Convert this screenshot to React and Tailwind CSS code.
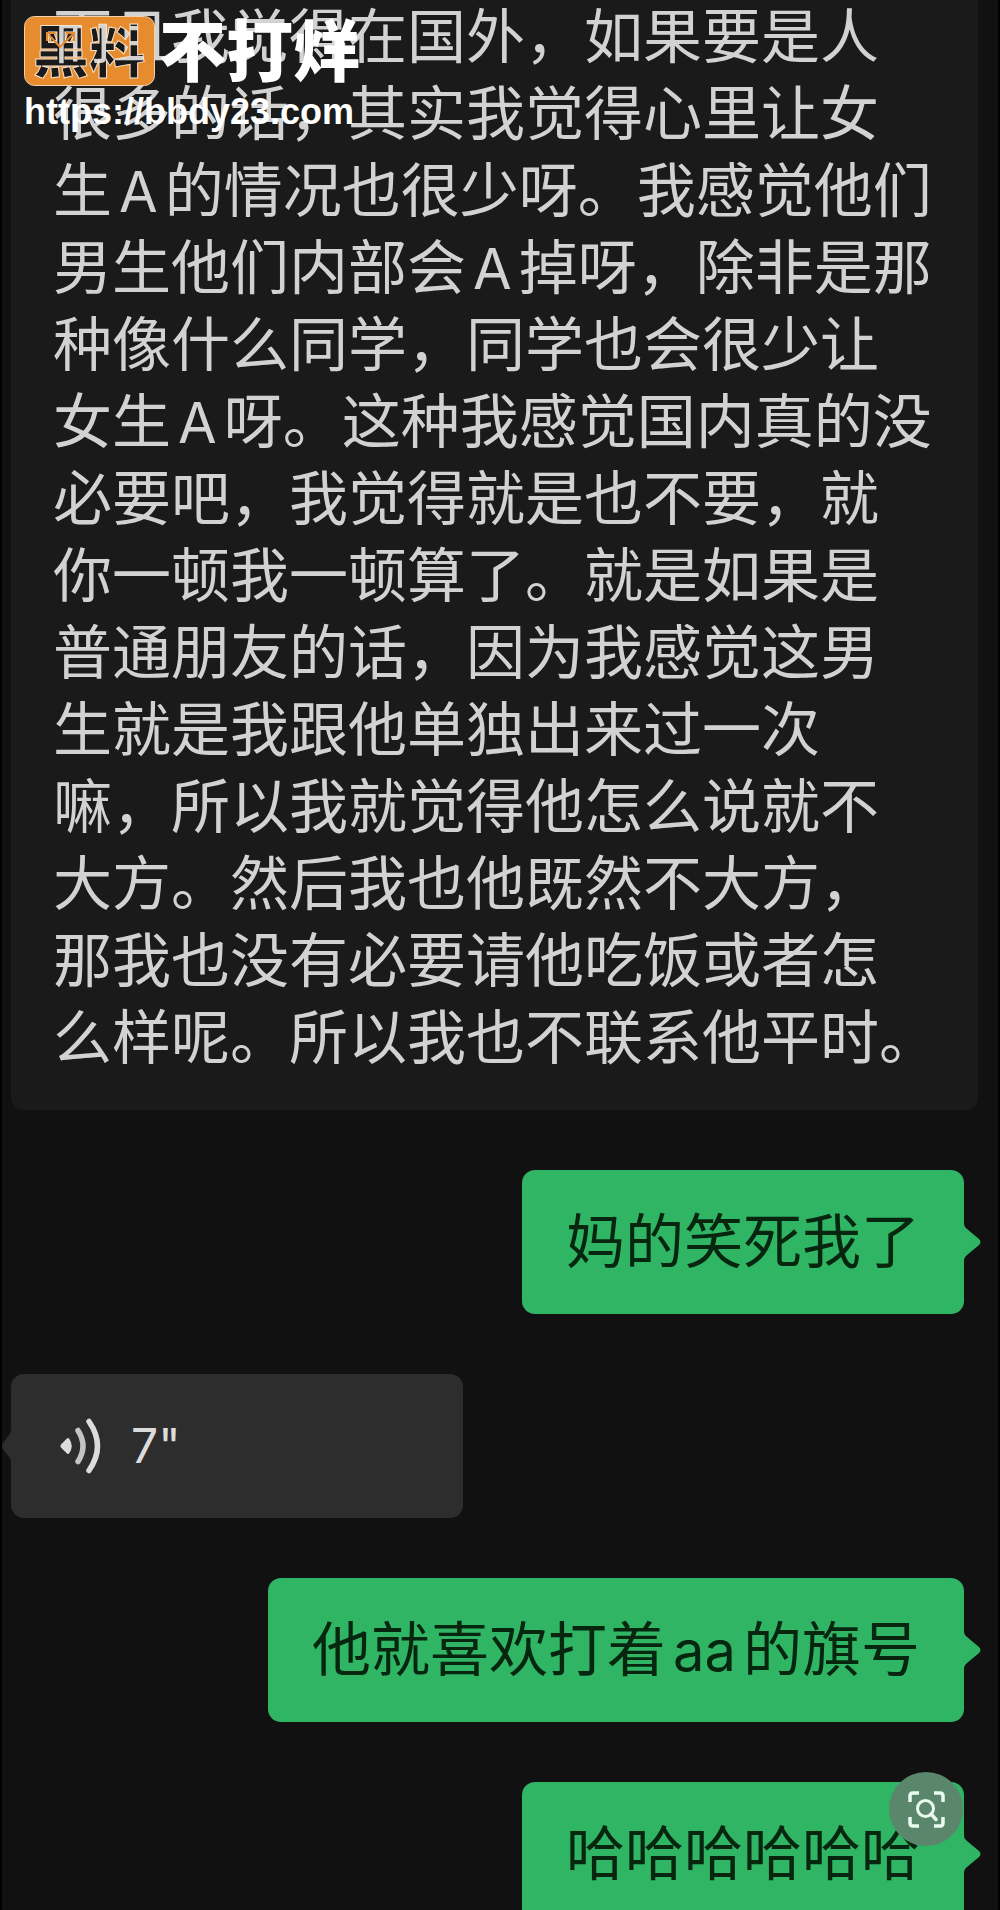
const transcript = [
  '而且我觉得在国外，如果要是人',
  '很多的话，其实我觉得心里让女',
  '生A的情况也很少呀。我感觉他们',
  '男生他们内部会A掉呀，除非是那',
  '种像什么同学，同学也会很少让',
  '女生A呀。这种我感觉国内真的没',
  '必要吧，我觉得就是也不要，就',
  '你一顿我一顿算了。就是如果是',
  '普通朋友的话，因为我感觉这男',
  '生就是我跟他单独出来过一次',
  '嘛，所以我就觉得他怎么说就不',
  '大方。然后我也他既然不大方，',
  '那我也没有必要请他吃饭或者怎',
  '么样呢。所以我也不联系他平时。',
]

// Latin runs get a little air on both sides
function MixedText({ children }) {
  return children.split(/([A-Za-z]+)/).map((part, i) =>
    i % 2 ? (
      <span key={i} className="mx-[7px] font-[Inter,sans-serif] text-[56px] leading-none">
        {part}
      </span>
    ) : (
      part
    )
  )
}

function SentBubble({ children }) {
  return (
    <div className="relative mr-[34px] shrink-0 self-end whitespace-nowrap rounded-[13px] bg-[#30b565] px-11 pb-9 pt-7 text-[59px] leading-[80px] text-[#06260f]">
      <MixedText>{children}</MixedText>
      <svg
        className="absolute left-full top-1/2 h-10 w-[17px] -translate-y-1/2"
        viewBox="0 0 17 40"
        fill="#30b565"
        aria-hidden="true"
      >
        <path d="M0 1C0 4 1 5 3 7L15 17Q18 20 15 23L3 33C1 35 0 36 0 39Z" />
      </svg>
    </div>
  )
}

function VoiceBubble({ seconds }) {
  return (
    <button
      type="button"
      className="relative ml-[9px] flex h-36 w-[45.4%] shrink-0 items-center rounded-[13px] bg-[#2d2d2d] pl-12 text-left text-[#dcdcdc]"
    >
      <svg
        className="absolute right-full top-1/2 h-9 w-[9px] -translate-y-1/2"
        viewBox="0 0 10 36"
        preserveAspectRatio="none"
        fill="#2d2d2d"
        aria-hidden="true"
      >
        <path d="M10 1C10 4 9 6 7 8L1 15Q-1 18 1 21L7 28C9 30 10 32 10 35Z" />
      </svg>
      <svg
        className="h-14 w-11"
        viewBox="0 0 44 56"
        fill="none"
        stroke="currentColor"
        strokeWidth="5.5"
        strokeLinecap="round"
        aria-hidden="true"
      >
        <path
          d="M9 21.5Q13.5 28 9 34.5L3.5 29Q2.500 28 3.500 27Z"
          fill="currentColor"
          strokeWidth="3"
          strokeLinejoin="round"
        />
        <path d="M19 12.5Q29 28 19 43.5" stroke="#c4c4c4" />
        <path d="M30 3.500Q47 28 30 52.500" />
      </svg>
      <span className="ml-7 font-[Inter,sans-serif] text-5xl leading-none">{seconds}"</span>
    </button>
  )
}

function Watermark() {
  return (
    <a href="https://bbdy23.com" className="absolute left-[22px] top-4 block text-white">
      <span className="flex items-start gap-1">
        <svg className="h-[70px] w-[131px]" viewBox="0 0 131 70" aria-label="黑料">
          <mask id="cut">
            <rect width="131" height="70" fill="white" />
            <text x="9" y="56" fontSize="56" fontWeight="900" fill="black">
              黑料
            </text>
          </mask>
          <rect
            x="0.5"
            y="0.5"
            width="130"
            height="69"
            rx="10"
            fill="#e78b2f"
            stroke="#f3d3ad"
            mask="url(#cut)"
          />
          <text
            x="9"
            y="56"
            fontSize="56"
            fontWeight="900"
            fill="none"
            stroke="#f6e3cc"
            strokeWidth="1"
          >
            黑料
          </text>
          <path
            d="M25 19L36 31L48 19M23 25V17H31M42 17H50V25"
            fill="none"
            stroke="#e78b2f"
            strokeWidth="2"
          />
        </svg>
        <span className="text-[67px] font-black leading-[62px]">不打烊</span>
      </span>
      <span className="mt-1.5 block font-['Liberation_Sans',sans-serif] text-4xl font-bold leading-10">
        https://bbdy23.com
      </span>
    </a>
  )
}

function ImageSearchButton() {
  return (
    <button
      type="button"
      aria-label="识图"
      className="absolute bottom-16 right-[35px] flex size-[74px] items-center justify-center rounded-full bg-[#5a876b] text-[#e9fbf0]"
    >
      <svg
        className="size-[37px]"
        viewBox="0 0 37 37"
        fill="none"
        stroke="currentColor"
        strokeWidth="3.5"
        aria-hidden="true"
      >
        <path d="M2 11V5Q2 2 5 2H11M26 2H32Q35 2 35 5V11M35 26V32Q35 35 32 35H26M11 35H5Q2 35 2 32V26" />
        <circle cx="17.5" cy="17.5" r="8" strokeWidth="3" />
        <path d="M23 23L28 28.5" strokeLinecap="round" />
      </svg>
    </button>
  )
}

export default function App() {
  return (
    <main className="relative flex h-screen flex-col gap-[60px] overflow-hidden border-x-2 border-black bg-[#111111] font-['Noto_Sans_CJK_SC',sans-serif]">
      <div className="-mt-1.5 ml-[9px] mr-5 shrink-0 rounded-b-xl bg-[#1a1a1a] pb-[38px] pl-[42px] text-[59px] leading-[77px] text-[#d2d2d2]">
        {transcript.map((line) => (
          <p key={line} className="whitespace-nowrap">
            <MixedText>{line}</MixedText>
          </p>
        ))}
      </div>

      <SentBubble>妈的笑死我了</SentBubble>
      <VoiceBubble seconds={7} />
      <SentBubble>他就喜欢打着aa的旗号</SentBubble>
      <SentBubble>哈哈哈哈哈哈</SentBubble>

      <Watermark />
      <ImageSearchButton />
    </main>
  )
}
